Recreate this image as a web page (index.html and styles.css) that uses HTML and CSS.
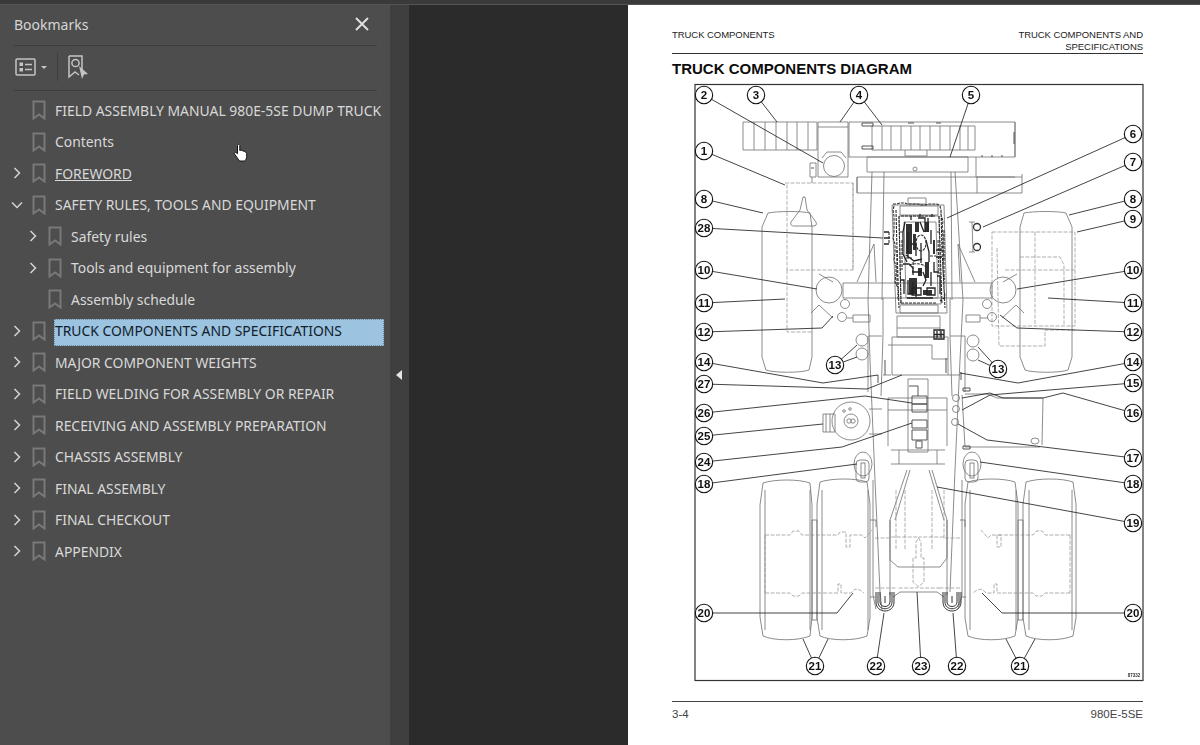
FILE: index.html
```html
<!DOCTYPE html>
<html lang="en">
<head>
<meta charset="utf-8">
<title>Bookmarks</title>
<link rel="stylesheet" href="styles.css">
</head>
<body>
<div class="topbar"></div>
<div class="app">
  <aside class="panel">
    <header class="panel-head">
      <span class="panel-title">Bookmarks</span>
      <svg class="close" width="14" height="14" viewBox="0 0 14 14"><path d="M1 1L13 13M13 1L1 13"/></svg>
    </header>
    <div class="tools">
      <svg class="tool-list" width="34" height="20" viewBox="0 0 34 20">
        <rect x="1" y="2" width="19" height="16" rx="1"/>
        <rect class="solid" x="4.500" y="5.500" width="3.500" height="3.500"/><rect class="solid" x="4.500" y="11" width="3.500" height="3.500"/>
        <path d="M10 7.500h7M10 12.500h7"/>
        <path class="solid" d="M26 9h6l-3 3z"/>
      </svg>
      <span class="tool-sep"></span>
      <svg class="tool-mark" width="22" height="26" viewBox="0 0 22 26">
        <path d="M2 2h13v15M2 2v21l6-5 4 3"/>
        <circle cx="8.500" cy="9" r="3.600"/>
        <path class="solid" d="M12 12l9 8-4 .5-2 4.500z"/>
      </svg>
    </div>
    <ul class="tree">
      <li class="row"><span class="tw"></span><svg class="bm" width="14" height="20" viewBox="0 0 14 20"><path d="M1.500 1.500h11v17l-5.500-4-5.500 4z"/></svg><span class="label">FIELD ASSEMBLY MANUAL 980E-5SE DUMP TRUCK</span></li>
      <li class="row"><span class="tw"></span><svg class="bm" width="14" height="20" viewBox="0 0 14 20"><path d="M1.500 1.500h11v17l-5.500-4-5.500 4z"/></svg><span class="label">Contents</span></li>
      <li class="row"><svg class="tw" width="12" height="12" viewBox="0 0 12 12"><path d="M3.500 1l5 5-5 5"/></svg><svg class="bm" width="14" height="20" viewBox="0 0 14 20"><path d="M1.500 1.500h11v17l-5.500-4-5.500 4z"/></svg><span class="label link">FOREWORD</span></li>
      <li class="row"><svg class="tw" width="12" height="12" viewBox="0 0 12 12"><path d="M1 3.500l5 5 5-5"/></svg><svg class="bm" width="14" height="20" viewBox="0 0 14 20"><path d="M1.500 1.500h11v17l-5.500-4-5.500 4z"/></svg><span class="label">SAFETY RULES, TOOLS AND EQUIPMENT</span></li>
      <li class="row sub"><svg class="tw" width="12" height="12" viewBox="0 0 12 12"><path d="M3.500 1l5 5-5 5"/></svg><svg class="bm" width="14" height="20" viewBox="0 0 14 20"><path d="M1.500 1.500h11v17l-5.500-4-5.500 4z"/></svg><span class="label">Safety rules</span></li>
      <li class="row sub"><svg class="tw" width="12" height="12" viewBox="0 0 12 12"><path d="M3.500 1l5 5-5 5"/></svg><svg class="bm" width="14" height="20" viewBox="0 0 14 20"><path d="M1.500 1.500h11v17l-5.500-4-5.500 4z"/></svg><span class="label">Tools and equipment for assembly</span></li>
      <li class="row sub"><span class="tw"></span><svg class="bm" width="14" height="20" viewBox="0 0 14 20"><path d="M1.500 1.500h11v17l-5.500-4-5.500 4z"/></svg><span class="label">Assembly schedule</span></li>
      <li class="row selected"><svg class="tw" width="12" height="12" viewBox="0 0 12 12"><path d="M3.500 1l5 5-5 5"/></svg><svg class="bm" width="14" height="20" viewBox="0 0 14 20"><path d="M1.500 1.500h11v17l-5.500-4-5.500 4z"/></svg><span class="label">TRUCK COMPONENTS AND SPECIFICATIONS</span></li>
      <li class="row"><svg class="tw" width="12" height="12" viewBox="0 0 12 12"><path d="M3.500 1l5 5-5 5"/></svg><svg class="bm" width="14" height="20" viewBox="0 0 14 20"><path d="M1.500 1.500h11v17l-5.500-4-5.500 4z"/></svg><span class="label">MAJOR COMPONENT WEIGHTS</span></li>
      <li class="row"><svg class="tw" width="12" height="12" viewBox="0 0 12 12"><path d="M3.500 1l5 5-5 5"/></svg><svg class="bm" width="14" height="20" viewBox="0 0 14 20"><path d="M1.500 1.500h11v17l-5.500-4-5.500 4z"/></svg><span class="label">FIELD WELDING FOR ASSEMBLY OR REPAIR</span></li>
      <li class="row"><svg class="tw" width="12" height="12" viewBox="0 0 12 12"><path d="M3.500 1l5 5-5 5"/></svg><svg class="bm" width="14" height="20" viewBox="0 0 14 20"><path d="M1.500 1.500h11v17l-5.500-4-5.500 4z"/></svg><span class="label">RECEIVING AND ASSEMBLY PREPARATION</span></li>
      <li class="row"><svg class="tw" width="12" height="12" viewBox="0 0 12 12"><path d="M3.500 1l5 5-5 5"/></svg><svg class="bm" width="14" height="20" viewBox="0 0 14 20"><path d="M1.500 1.500h11v17l-5.500-4-5.500 4z"/></svg><span class="label">CHASSIS ASSEMBLY</span></li>
      <li class="row"><svg class="tw" width="12" height="12" viewBox="0 0 12 12"><path d="M3.500 1l5 5-5 5"/></svg><svg class="bm" width="14" height="20" viewBox="0 0 14 20"><path d="M1.500 1.500h11v17l-5.500-4-5.500 4z"/></svg><span class="label">FINAL ASSEMBLY</span></li>
      <li class="row"><svg class="tw" width="12" height="12" viewBox="0 0 12 12"><path d="M3.500 1l5 5-5 5"/></svg><svg class="bm" width="14" height="20" viewBox="0 0 14 20"><path d="M1.500 1.500h11v17l-5.500-4-5.500 4z"/></svg><span class="label">FINAL CHECKOUT</span></li>
      <li class="row"><svg class="tw" width="12" height="12" viewBox="0 0 12 12"><path d="M3.500 1l5 5-5 5"/></svg><svg class="bm" width="14" height="20" viewBox="0 0 14 20"><path d="M1.500 1.500h11v17l-5.500-4-5.500 4z"/></svg><span class="label">APPENDIX</span></li>
    </ul>
    <svg class="cursor" width="16" height="19" viewBox="0 0 16 19"><path d="M5 1.500c.9-.7 1.800 0 1.800 1v5l1-.3c.8 0 1 .2 1.200.6.800-.3 1.500 0 1.700.6.800-.3 1.600 0 1.700.8.700 0 1.300.4 1.300 1.300v3c0 2-1 3.500-2 4.500H6.500L1.500 11c-.6-1 .4-2 1.400-1.500l1.600 1.200V2.500c0-.4.200-.8.500-1z"/></svg>
  </aside>
  <div class="splitter"><span class="collapse"></span></div>
  <main class="viewer">
    <article class="page">
      <header class="page-head">
        <span>TRUCK COMPONENTS</span>
        <span class="page-head-right">TRUCK COMPONENTS AND<br>SPECIFICATIONS</span>
      </header>
      <h1 class="page-title">TRUCK COMPONENTS DIAGRAM</h1>
      <svg class="diagram" width="460" height="606" viewBox="690 80 460 606">
        <rect class="frame" x="695" y="84.500" width="448" height="596"/>
        <!-- front structure -->
        <g class="ln">
          <path d="M743 122h74v28h-74zM754 122v28M765 122v28M776 122v28M787 122v28M797 122v28M808 122v28"/>
          <path d="M818 122h30v55h-30zM818 127h30M849 122h166v35h-166zM872 126h103v24h-103z"/>
          <path d="M882 126v24M891 126v24M901 126v24M911 126v24M920 126v24M930 126v24M940 126v24M950 126v24M960 126v24M968 126v24"/>
          <path d="M867 157h101v15h-101zM905 150v6h22v-6M976 157v20h39M1015 157v-35"/>
          <path d="M857 177h165v16h-165zM857 177v16M977 177v16M1022 177v-3"/>
          <circle cx="834" cy="166" r="10.500"/><path d="M822 158l5-6h14l5 6"/><circle cx="915" cy="169" r="2"/>
          <path d="M810 163h6v14h-6zM812 177v6"/>
          <path d="M872 172l-4 128 2 60 5 120 5 112 2 18M884 172l-2 128M955 172l8 128-3 60-5 110-5 122M951 172l1 128"/>
          <path d="M883 298v38M868 336h14M950 298v38M965 336h-15M868 336v56M965 336v56M883 336l-2 60M950 336l2 60"/>
          <path d="M843 283h149v15h-149zM876 282l-2-38-17 38M960 282l-2-38 17 38"/>
          <circle cx="829" cy="290" r="13"/><circle cx="1003" cy="290" r="13"/>
          <circle cx="845" cy="304" r="4.500"/><circle cx="842" cy="317" r="4.500"/><circle cx="987" cy="304" r="4.500"/><circle cx="992" cy="317" r="4.500"/>
          <path d="M819 274l14 8M833 318l-14-13-8 8M1017 274l-14 8M1002 318l14-13 8 8"/>
          <path d="M853 315h17v7h-17zM847 318h6M966 315h14v7h-14zM980 318h8"/>
          <circle cx="862" cy="340" r="6"/><circle cx="862" cy="354" r="6"/><circle cx="973" cy="341" r="6"/><circle cx="973" cy="355" r="6"/>
          <path d="M892 337h56v38h-56zM897 316h43v21h-43zM897 328h43M883 375h8M948 375h12M888 345h44v14h16"/>
          <path d="M888 398h59v12h-59zM908 379h20v73h-20zM888 410v36M947 410v36M891 450h54M891 464h54M899 450v14M937 450v14"/>
          <circle cx="851" cy="421" r="19"/><circle cx="851" cy="421" r="7"/><circle cx="849" cy="421" r="2.200"/><circle cx="853" cy="421" r="2.200"/><circle cx="844" cy="411" r="1.300"/><circle cx="850" cy="409" r="1.300"/>
          <path d="M823 414h12v18h-12zM826 414v18M830 414v18M869 409h13M869 434h13"/>
          <circle cx="956" cy="398" r="3.500"/><circle cx="956" cy="409" r="3.500"/><circle cx="955" cy="422" r="3.500"/>
          <path d="M1043 398l-1 47M965 394h22l10 4h46M965 447l-3-52M965 447h75"/><ellipse cx="1035" cy="441" rx="4" ry="3"/>
          <ellipse cx="863" cy="464" rx="9" ry="12"/><rect x="856" y="460" width="13" height="22" rx="4"/><rect x="861" y="463" width="4" height="15"/>
          <ellipse cx="972" cy="464" rx="9" ry="12"/><rect x="965" y="460" width="13" height="22" rx="4"/><rect x="970" y="463" width="4" height="15"/>
          <path d="M907 470l-17 50v40l8 7h42l7-9v-38l-15-50M910 470l-15 50M929 470l15 50"/>
          <path d="M893 597l7-5h37l7 5M873 480v115l3 14M890 520v75M962 480v115l-4 14M947 520v75"/>
          <path d="M812 520h5v100h-5zM1018 520h5v100h-5zM870 520h6v7M960 520h5v7M870 597h5M962 597h4"/>
        </g>
        <!-- tyres -->
        <g class="ln">
          <path d="M768 213c10-2 34-2 42 0l2 14v130l-3 13c-8 3-35 3-43 0l-4-13V227z"/>
          <path d="M1024 213c10-2 34-2 42 0l6 14v130l-4 13c-8 3-35 3-43 0l-5-13V227z"/>
          <path d="M763 483c12-4 36-4 47 0l2 22v112l-2 19c-12 5-36 5-47 0l-3-19V505z"/>
          <path d="M820 482c12-4 36-4 47 0l3 22v114l-3 18c-12 5-36 5-47 0l-3-18V504z"/>
          <path d="M968 482c12-4 36-4 47 0l3 22v114l-3 18c-12 5-36 5-47 0l-3-18V504z"/>
          <path d="M1026 482c12-4 36-4 47 0l3 22v114l-3 18c-12 5-36 5-47 0l-3-18V504z"/>
          <path d="M765 490v140M810 490v140M822 490v140M868 490v140M970 490v140M1016 490v140M1029 490v140M1072 490v140"/>
        </g>
        <!-- dashed hidden outlines -->
        <g class="ds">
          <path d="M785 183h68v87H787v-87M787 270v62h25M853 183v87"/>
          <path d="M992 232h83v94h-83zM997 248l2 98h46v-16h30M1035 232v94M1005 270h70M1020 257h40l4 8v60"/>
          <path d="M765 535h25l3-4h6l3 4h36l2-3h6v15h4v-12h12l3 3 7-8M765 593h25l3 3h6l3-3h36v-9h3v9h10l4-4 5 1 4 3M765 535v58"/>
          <path d="M1070 535h-25l-3-4h-6l-3 4h-36v12h4v-12h-10l-3 3-7-8M1070 593h-25l-3 3h-6l-3-3h-36v-9h-3v9h-8l-4-4-5 1-4 3M1070 535v58"/>
          <path d="M875 538h14l2-1h27l3 5v16h3v24l-7 6h-20M960 538h-14l-2-1h-25l-3 5v16h-3v24l7 6h20M875 588h21M960 588h-21"/>
          <path d="M896 490v60M905 490v60M932 490v60M944 490v50"/>
        </g>
        <g class="ln">
          <path d="M803 197l-3 13-9 12c-1 3 1 4 3 4h19c3 0 4-1 3-4l-9-12-2-13z"/>
        </g>
        <!-- engine and dark detail -->
        <path class="ln" d="M892 205h52l3 108h-51zM900 206h38v9h-38zM908 198h18v6h-18zM900 305h38v8h-38zM899 216h40l2 88h-40zM904 222h32l2 76h-32z"/>
        <path class="dk" d="M893 204h4l3-1h5l2 1h11l3 1h4l4-1h8l3 2 1 4v5l2 6-1 8 1 6v14l1 8-1 6v8l1 8v10l1 8-2 2-3 2M894 206l-1 4 1 6v18l-1 4 2 6v8l-1 8 2 6v8l-1 8 3 6v12M901 216h34M901 303h36M896 210l1 40 2 58M941 210l1 40 3 58M899 216l2 88M939 216l3 88"/>
        <path class="mass" d="M906 224h6v30h-6zM915 222h4v10h-4zM925 222h4v10h-4zM913 234h3v16h-3zM909 278h8v16h-8zM923 290h9v5h-9zM925 262h4v16h-4zM918 268h4v8h-4zM933 240h2v14h-2z"/>
        <path class="dk2" d="M905 222l-2 10v22l4 8M908 232v26M911 244h5v12M918 218h7v14M920 222l4 10M928 218v14M931 230v14M906 255l8 6 8-2M921 243v20M926 240l3 12v10M912 272h10M908 280v14h5v-12M916 285v12M923 272l3 8-3 6M927 288h8v7h-8zM912 288h9v7h-9zM931 272v14M936 250h6M936 257h6M884 232h5M884 238h6M884 244h5M907 298h26M903 264h6l4 4v7M934 262v10h5M900 280h4v14M937 276h3v18M911 216v4M920 214v3M932 214v3"/>
        <path class="dk" d="M916 243a5 8 0 1 0 10 0a5 8 0 1 0-10 0M889 232v12M909 265c6-2 14-2 18 3M902 240v30M938 240l1 34M944 230v50M897 250v36M906 258h6M913 262v10M930 256h6M900 232h3M937 232h4"/>
        <path class="dk2" d="M934 330h10v9h-10zM937 331v7M941 331v7M934 334.500h10"/>
        <path class="dk3" d="M862 123h11v3h-11zM862 146h11v3h-11zM908 123h6M936 123h5M1014 132v12M981 156h2M991 156h2M1001 156h2M885 375v-15M946 373v-15M878 375v8M961 372v8M918 386h-9M918 386v10M912 396h15v8h-15zM912 404h15v8h-15zM912 420h15v8h-15zM912 430h15v10h-15zM916 441h6v7h-6z"/>
        <path class="dk3" d="M963 388h7v3h-7zM963 446h7v3h-7zM811 168h3"/>
        <circle class="dkc" cx="977" cy="227" r="3.500"/><circle class="dkc" cx="977" cy="247" r="3.500"/>
        <path class="ln" d="M969 222h6M969 252h6M972 222l1 30"/>
        <path class="brake" d="M876 592v10c0 12 18 12 18 0v-10M878 592v10c0 9 14 9 14 0v-10M880 592v10c0 6 10 6 10 0v-10M943 592v10c0 12 18 12 18 0v-10M945 592v10c0 9 14 9 14 0v-10M947 592v10c0 6 10 6 10 0v-10M885 596v7M952 596v7"/>
        <!-- leader lines -->
        <g class="cl">
          <path d="M704 95l119 68M756 95l21 27M859 95l-19 27M859 95l23 30M971 95l-21 62M1133 134l-186 84M1133 162l-150 65"/>
          <path d="M704 151l81 34M704 199l59 14M1133 199l-64 16M1133 219l-56 13M704 228l179 10"/>
          <path d="M704 270l113 19M1133 270l-116 19M704 303l81-4M1133 303l-85-5M704 332l118-4 11-12M1133 332l-116-4-17-13"/>
          <path d="M835 365l22-20M835 365l22-8M998 369l-20-22M998 369l-20-9"/>
          <path d="M704 362l119 21 55-8M1133 362l-115 21-58-10M704 384l163 5 35-14M704 413l161-17 47 7M704 436l119-12M704 462l138-15 70-24"/>
          <path d="M1133 383l-143 12-28 15M1133 413l-70-20-20 5h-40l-13-5-28 5M1133 458l-146-18-29-16M704 484l153-20M1133 484l-153-22M1133 523l-196-36"/>
          <path d="M704 613h133l16-20M1133 613h-131l-20-20M815 666l-12-27M815 666l13-27M1020 666l-14-27M1020 666l15-27M876 666l8-53M957 666l-4-53M921 666l-4-74"/>
        </g>
        <g class="callouts">
          <g><circle cx="704" cy="95" r="8.700"/><text x="704" y="99">2</text></g>
          <g><circle cx="756" cy="95" r="8.700"/><text x="756" y="99">3</text></g>
          <g><circle cx="859" cy="95" r="8.700"/><text x="859" y="99">4</text></g>
          <g><circle cx="971" cy="95" r="8.700"/><text x="971" y="99">5</text></g>
          <g><circle cx="1133" cy="134" r="8.700"/><text x="1133" y="138">6</text></g>
          <g><circle cx="1133" cy="162" r="8.700"/><text x="1133" y="166">7</text></g>
          <g><circle cx="704" cy="151" r="8.700"/><text x="704" y="155">1</text></g>
          <g><circle cx="704" cy="199" r="8.700"/><text x="704" y="203">8</text></g>
          <g><circle cx="1133" cy="199" r="8.700"/><text x="1133" y="203">8</text></g>
          <g><circle cx="1133" cy="219" r="8.700"/><text x="1133" y="223">9</text></g>
          <g><circle cx="704" cy="228" r="8.700"/><text x="704" y="232">28</text></g>
          <g><circle cx="704" cy="270" r="8.700"/><text x="704" y="274">10</text></g>
          <g><circle cx="1133" cy="270" r="8.700"/><text x="1133" y="274">10</text></g>
          <g><circle cx="704" cy="303" r="8.700"/><text x="704" y="307">11</text></g>
          <g><circle cx="1133" cy="303" r="8.700"/><text x="1133" y="307">11</text></g>
          <g><circle cx="704" cy="332" r="8.700"/><text x="704" y="336">12</text></g>
          <g><circle cx="1133" cy="332" r="8.700"/><text x="1133" y="336">12</text></g>
          <g><circle cx="835" cy="365" r="8.700"/><text x="835" y="369">13</text></g>
          <g><circle cx="998" cy="369" r="8.700"/><text x="998" y="373">13</text></g>
          <g><circle cx="704" cy="362" r="8.700"/><text x="704" y="366">14</text></g>
          <g><circle cx="1133" cy="362" r="8.700"/><text x="1133" y="366">14</text></g>
          <g><circle cx="704" cy="384" r="8.700"/><text x="704" y="388">27</text></g>
          <g><circle cx="1133" cy="383" r="8.700"/><text x="1133" y="387">15</text></g>
          <g><circle cx="704" cy="413" r="8.700"/><text x="704" y="417">26</text></g>
          <g><circle cx="1133" cy="413" r="8.700"/><text x="1133" y="417">16</text></g>
          <g><circle cx="704" cy="436" r="8.700"/><text x="704" y="440">25</text></g>
          <g><circle cx="1133" cy="458" r="8.700"/><text x="1133" y="462">17</text></g>
          <g><circle cx="704" cy="462" r="8.700"/><text x="704" y="466">24</text></g>
          <g><circle cx="704" cy="484" r="8.700"/><text x="704" y="488">18</text></g>
          <g><circle cx="1133" cy="484" r="8.700"/><text x="1133" y="488">18</text></g>
          <g><circle cx="1133" cy="523" r="8.700"/><text x="1133" y="527">19</text></g>
          <g><circle cx="704" cy="613" r="8.700"/><text x="704" y="617">20</text></g>
          <g><circle cx="1133" cy="613" r="8.700"/><text x="1133" y="617">20</text></g>
          <g><circle cx="815" cy="666" r="8.700"/><text x="815" y="670">21</text></g>
          <g><circle cx="876" cy="666" r="8.700"/><text x="876" y="670">22</text></g>
          <g><circle cx="921" cy="666" r="8.700"/><text x="921" y="670">23</text></g>
          <g><circle cx="957" cy="666" r="8.700"/><text x="957" y="670">22</text></g>
          <g><circle cx="1020" cy="666" r="8.700"/><text x="1020" y="670">21</text></g>
        </g>
        <text class="code" x="1134" y="677" text-anchor="middle">87332</text>
      </svg>
      <footer class="page-foot">
        <span>3-4</span>
        <span>980E-5SE</span>
      </footer>
    </article>
  </main>
</div>
</body>
</html>
```
FILE: styles.css
```css
* { box-sizing: border-box; }
html, body { margin: 0; height: 100%; overflow: hidden; }
body { display: flex; flex-direction: column; background: #2b2b2b; font-family: "Noto Sans", "Open Sans", sans-serif; }
.topbar { height: 5px; flex: none; background: #3a3a3a; border-bottom: 1px solid #555; }
.app { flex: 1; display: flex; min-height: 0; }

.panel { position: relative; width: 390px; flex: none; background: #4d4d4d; color: #dcdcdc; }
.panel-head { height: 41px; margin: 0 13px 0 14px; display: flex; align-items: center; justify-content: space-between; border-bottom: 1px solid #3d3d3d; padding: 0 8px 2px 0; }
.panel-title { font-size: 14px; color: #d6d6d6; }
.close path { fill: none; stroke: #dedede; stroke-width: 2; }
.tools { height: 45px; margin: 0 13px 0 14px; display: flex; align-items: center; border-bottom: 1px solid #3d3d3d; padding-left: 1px; padding-bottom: 3px; }
.tool-list rect, .tool-list path, .tool-mark path, .tool-mark circle { fill: none; stroke: #c4c4c4; stroke-width: 1.500; }
.tools .solid { fill: #c4c4c4; stroke: none; }
.tool-sep { width: 1px; height: 28px; background: #3d3d3d; margin: 0 9px 0 8px; }

.tree { list-style: none; margin: 3.500px 0 0; padding: 0; }
.row { height: 31.500px; display: flex; align-items: center; padding-left: 11px; font-size: 13.900px; }
.row.sub { padding-left: 27px; }
.tw { width: 12px; height: 12px; flex: none; margin-right: 9px; }
.tw path { fill: none; stroke: #d4d4d4; stroke-width: 1.500; }
.bm { flex: none; margin-right: 8px; }
.bm path { fill: none; stroke: #797979; stroke-width: 2; }
.label { white-space: nowrap; color: #d9d9d9; padding-left: 1px; line-height: 27px; }
.link { text-decoration: underline; }
.selected .label { background: #9cc3e0; color: #10202c; width: 330px; height: 27px; line-height: 23px; margin-top: 4px; outline: 1px dotted #6b8aa0; outline-offset: -1px; }
.cursor { position: absolute; left: 233px; top: 138px; }
.cursor path { fill: #fff; stroke: #111; stroke-width: 1; }

.splitter { width: 19px; flex: none; background: #3f3f3f; display: flex; align-items: center; justify-content: center; }
.collapse { width: 0; height: 0; border-style: solid; border-width: 5px 6px 5px 0; border-color: transparent #e4e4e4 transparent transparent; margin-right: 1px; }

.viewer { flex: 1; padding-left: 219px; min-width: 0; }
.page { height: 100%; background: #fff; padding: 24px 57px 0 44px; font-family: "Liberation Sans", Arial, sans-serif; color: #222; }
.page-head { display: flex; justify-content: space-between; font-size: 9.500px; line-height: 11.500px; height: 25px; border-bottom: 1px solid #333; letter-spacing: -0.050px; }
.page-head-right { text-align: right; }
.page-title { margin: 6px 0 0; font-size: 15px; line-height: 18px; font-weight: 700; color: #0c0c0c; height: 17px; }
.diagram { display: block; margin: 3px 0 0 18px; filter: blur(0.3px); overflow: visible; }
.frame { fill: none; stroke: #333; stroke-width: 1.200; }
.ln { fill: none; stroke: #6e6e6e; stroke-width: 0.800; }
.ds { fill: none; stroke: #8e8e8e; stroke-width: 0.700; stroke-dasharray: 4 1.500; }
.dk { fill: none; stroke: #2e2e2e; stroke-width: 1.100; stroke-dasharray: 3 1; }
.dk2 { fill: none; stroke: #222; stroke-width: 1.300; }
.dk3 { fill: none; stroke: #444; stroke-width: 0.900; }
.mass { fill: #333; }
.brake { fill: none; stroke: #333; stroke-width: 1; }
.dkc { fill: #fff; stroke: #333; stroke-width: 1.300; }
.cl { fill: none; stroke: #222; stroke-width: 0.850; }
.callouts circle { fill: #fff; stroke: #111; stroke-width: 1.100; }
.callouts text { font-family: "Liberation Sans Narrow", "Liberation Sans", sans-serif; font-size: 11.500px; font-weight: 700; fill: #111; text-anchor: middle; }
.code { font-family: "Liberation Sans Narrow", "Liberation Sans", sans-serif; font-size: 4.500px; font-weight: 700; fill: #333; }
.page-foot { display: flex; justify-content: space-between; margin-top: 15px; padding-top: 6px; border-top: 1px solid #444; font-size: 11.500px; color: #444; }
```
